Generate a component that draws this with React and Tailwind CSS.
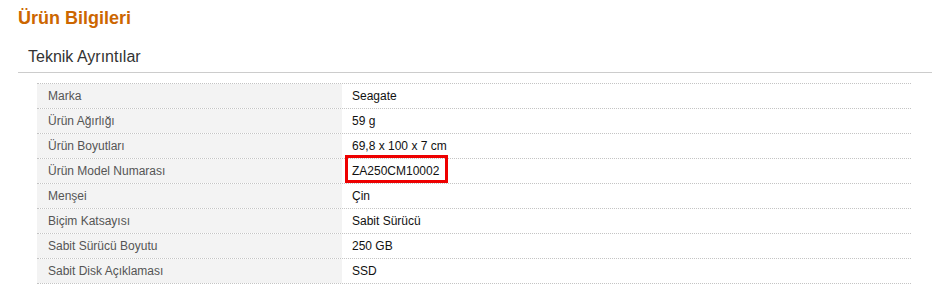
import React from 'react';

const specs = [
  { label: 'Marka', value: 'Seagate' },
  { label: 'Ürün Ağırlığı', value: '59 g' },
  { label: 'Ürün Boyutları', value: '69,8 x 100 x 7 cm' },
  { label: 'Ürün Model Numarası', value: 'ZA250CM10002', highlight: true },
  { label: 'Menşei', value: 'Çin' },
  { label: 'Biçim Katsayısı', value: 'Sabit Sürücü' },
  { label: 'Sabit Sürücü Boyutu', value: '250 GB' },
  { label: 'Sabit Disk Açıklaması', value: 'SSD' },
];

const SpecRow = ({ label, value, highlight, last }) => (
  <div
    className={`grid grid-cols-[305px_1fr] border-t border-dotted border-[#c4c4c4] ${last ? 'border-b' : ''}`}
  >
    <div className="bg-[#f3f3f3] pl-[11px] text-[12px] leading-[24px] text-[#555]">{label}</div>
    <div className="pl-[10px] text-[12px] leading-[24px] text-[#111]">
      {highlight ? (
        <span className="relative inline-block">
          {value}
          <span className="absolute -left-[7px] -right-[9px] -top-[4px] bottom-0 border-[3px] border-[#ee0000]" />
        </span>
      ) : (
        value
      )}
    </div>
  </div>
);

const App = () => {
  return (
    <div className="w-[939px] h-[293px] bg-white font-['Liberation_Sans',Arial,sans-serif] overflow-hidden">
      <h2 className="pl-[18px] pt-[7px] text-[18px] leading-[22px] font-bold text-[#cc6600]">Ürün Bilgileri</h2>
      <div className="ml-[18px] mr-[7px] mt-[18px] border-b border-[#cccccc] pb-[5px]">
        <h3 className="pl-[10px] text-[16px] leading-[20px] text-[#333]">Teknik Ayrıntılar</h3>
      </div>
      <div className="ml-[37px] mr-[28px] mt-[10px]">
        {specs.map((s, i) => (
          <SpecRow key={s.label} {...s} last={i === specs.length - 1} />
        ))}
      </div>
    </div>
  );
};

export default App;
